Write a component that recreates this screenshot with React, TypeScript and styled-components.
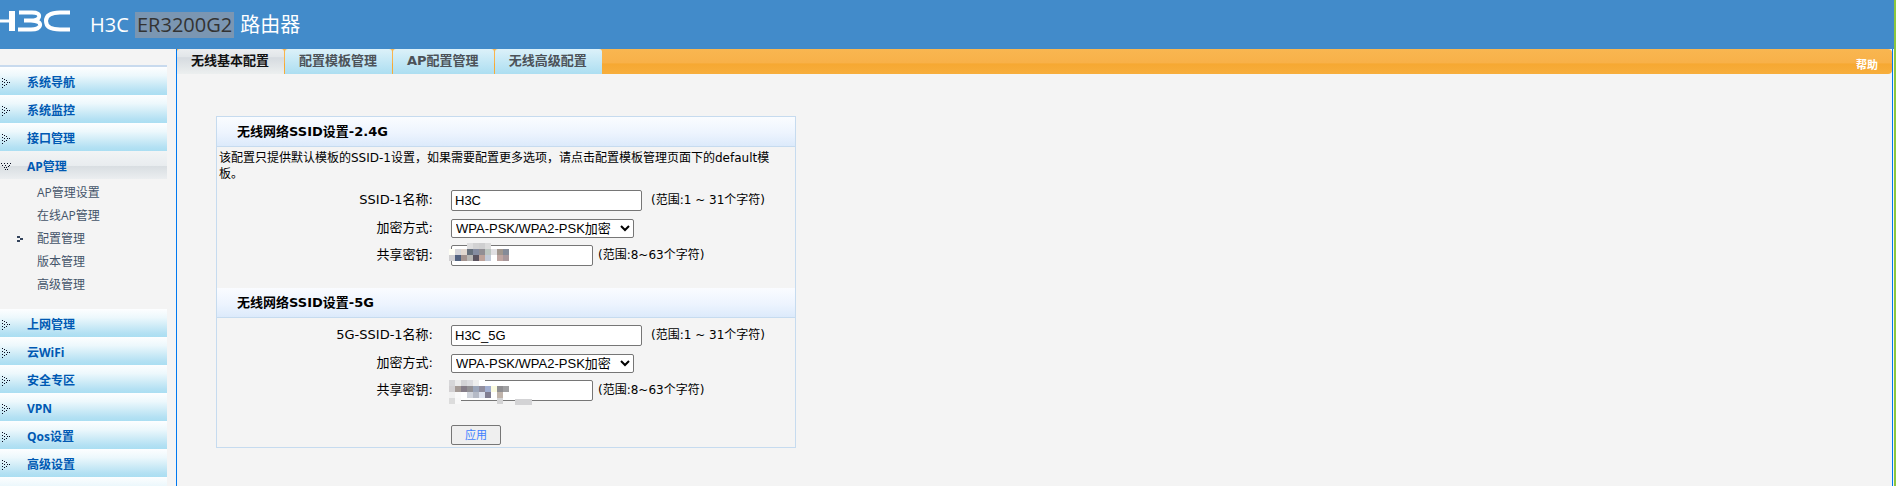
import React from "react";
import styled, { createGlobalStyle } from "styled-components";

const uiFont = `"Open Sans", "Noto Sans CJK SC", sans-serif`;
const wideFont = `"DejaVu Sans", "Noto Sans CJK SC", sans-serif`;
const fieldFont = `"Liberation Sans", "Noto Sans CJK SC", sans-serif`;

const GlobalStyle = createGlobalStyle`
  * { box-sizing: border-box; }
  body { margin: 0; background: #f4f4f4; color: #000; font: 12px/16px ${uiFont}; }
  #root { min-height: 100vh; display: flex; }
  ul { margin: 0; padding: 0; list-style: none; }
  a { color: inherit; text-decoration: none; }
`;

const Page = styled.div`
  flex: 1;
  min-width: 0;
  height: 100vh;
  overflow: hidden;
  display: flex;
  flex-direction: column;
  border-right: 2px solid #8cc63f;
`;

const Header = styled.header`
  flex: none;
  height: 49px;
  display: flex;
  align-items: center;
  gap: 19px;
  background: #428bca;
  color: #fff;
`;

const Logo = styled.svg`
  display: block;
  width: 71px;
  height: 49px;
`;

const Title = styled.h1`
  margin: 0;
  font-size: 20px;
  line-height: 26px;
  font-weight: 400;
`;

const Model = styled.mark`
  display: inline-block;
  margin: 0 1px;
  padding: 0 2px;
  background: #7b96b2;
  color: #333;
`;

const Body = styled.div`
  flex: 1;
  min-height: 0;
  display: flex;
`;

const Sidebar = styled.nav`
  flex: none;
  width: 176px;
  padding: 16px 9px 0 0;
  overflow: hidden;
`;

const Menu = styled.ul`
  border-top: 2px solid #c8daee;
`;

const MenuLink = styled.a<{ $open?: boolean }>`
  height: 28px;
  padding-top: 4px;
  display: flex;
  align-items: center;
  color: #0059b3;
  font-weight: 700;
  background: ${(p) =>
    p.$open
      ? "linear-gradient(#f2f4f5, #e8ecef 54%, #d9dee2 55%, #ebeef0)"
      : "linear-gradient(#fdfeff, #edf8fc 30%, #b5e1f3 85%, #aadef2)"};
`;

const Arrow = styled.svg`
  width: 12px;
  height: 12px;
  margin-right: 15px;
  fill: #080c20;
`;

const SubMenu = styled.ul`
  padding: 2px 0 13px;
`;

const SubLink = styled.a`
  height: 23px;
  display: flex;
  align-items: center;
  color: #44546a;
`;

const Marker = styled.span`
  width: 37px;
  padding-left: 17px;
  display: flex;
`;

const Main = styled.main`
  flex: 1;
  min-width: 0;
  margin-right: 1px;
  border: solid #0078f0;
  border-width: 0 1px;
`;

const TabBar = styled.div`
  height: 25px;
  display: flex;
  justify-content: space-between;
  background: linear-gradient(#f9b650, #f8b149 55%, #f6a832 60%, #f7ae3c);
  border-radius: 0 4px 4px 0;
`;

const Tabs = styled.nav`
  display: flex;
  gap: 1px;
`;

const Tab = styled.a<{ $active?: boolean }>`
  padding: 0 15px 0 14px;
  font: 700 13px/24px ${wideFont};
  white-space: nowrap;
  border-radius: 3px 3px 0 0;
  color: ${(p) => (p.$active ? "#111" : "#4c5258")};
  background: ${(p) =>
    p.$active
      ? "linear-gradient(#ebeef0, #e2e6e9 30%, #d6dbe0 35%, #ecefef)"
      : "linear-gradient(#dcf1f9, #acdef1)"};
`;

const Help = styled.a`
  padding: 7px 14px 0 0;
  font-size: 11px;
  line-height: 18px;
  font-weight: 700;
  color: #fff;
`;

const Panel = styled.form`
  width: 580px;
  max-width: 100%;
  margin: 42px 0 0 39px;
  border: 1px solid #c6dbef;
`;

const Heading = styled.h2`
  height: 30px;
  margin: 0;
  padding-left: 20px;
  font: 700 13px/30px ${wideFont};
  background: linear-gradient(#fafcff, #edf4fe 55%, #dceafb);
  border-bottom: 1px solid #c6dbef;
`;

const Note = styled.p`
  margin: 0;
  padding: 3px 20px 4px 2px;
  font-family: ${wideFont};
`;

const Fields = styled.div<{ $padded?: boolean }>`
  padding: ${(p) => (p.$padded ? "3px 0 0" : "0 0 20px")};
`;

const Row = styled.div<{ $compact?: boolean }>`
  height: ${(p) => (p.$compact ? 26 : 28)}px;
  display: flex;
  align-items: center;
`;

const Label = styled.label`
  width: 234px;
  padding-right: 18px;
  text-align: right;
  font: 13px/20px ${wideFont};
`;

const Control = styled.div`
  position: relative;
  display: flex;
`;

const TextBox = styled.input<{ $short?: boolean }>`
  width: ${(p) => (p.$short ? 142 : 191)}px;
  height: 21px;
  padding: 1px 3px;
  border: 1px solid #767676;
  border-radius: 2px;
  background: #fff;
  color: #000;
  font: 13px/17px ${fieldFont};
`;

const Choice = styled.select`
  width: 183px;
  height: 19px;
  padding: 0;
  border: 1px solid #767676;
  border-radius: 2px;
  background: #fff;
  color: #000;
  font: 13px/17px ${fieldFont};
`;

const Hint = styled.span<{ $near?: boolean }>`
  margin-left: ${(p) => (p.$near ? 5 : 9)}px;
  font-family: ${wideFont};
  white-space: pre;
`;

const Mask = styled.svg`
  position: absolute;
  left: -2px;
  top: -2px;
  pointer-events: none;
`;

const Actions = styled.div`
  padding: 22px 0 2px 234px;
  display: flex;
`;

const Apply = styled.button`
  width: 50px;
  height: 20px;
  padding: 0;
  border: 1px solid #767676;
  border-radius: 2px;
  background: #efefef;
  color: #4080ff;
  font: 11px/16px ${uiFont};
`;

const Dots = ({ points }: { points: number[][] }) => (
  <>
    {points.map(([x, y]) => (
      <rect key={`${x}-${y}`} x={x} y={y} width="1" height="1" />
    ))}
  </>
);

const closedDots = [[2, 1], [4, 2], [2, 4], [6, 3], [4, 5], [7, 5], [9, 5], [6, 7], [2, 7], [4, 8], [2, 10]];
const openDots = [[1, 2], [4, 2], [7, 2], [10, 2], [2, 4], [5, 4], [9, 4], [4, 6], [6, 6], [8, 5], [5, 8], [7, 8]];

const MenuItem = ({ text, open }: { text: string; open?: boolean }) => (
  <MenuLink href="#" $open={open}>
    <Arrow viewBox="0 0 12 12" shapeRendering="crispEdges" aria-hidden="true">
      <Dots points={open ? openDots : closedDots} />
    </Arrow>
    {text}
  </MenuLink>
);

const apItems = ["AP管理设置", "在线AP管理", "配置管理", "版本管理", "高级管理"];

const lowerItems = ["上网管理", "云WiFi", "安全专区", "VPN", "Qos设置", "高级设置", ""];

type Cell = [number, number, string];

const keyMask24: Cell[] = [
  [3, 0, "#dededf"], [4, 0, "#d2d2d3"], [5, 0, "#cfcfd0"], [6, 0, "#dcdcdc"],
  [0, 1, "#fffff5"], [1, 1, "#d5d5d8"], [2, 1, "#e2d8d0"], [3, 1, "#66707c"], [4, 1, "#858ca0"], [5, 1, "#918e94"], [6, 1, "#bdc6c2"], [7, 1, "#e0dfe2"], [8, 1, "#a1968d"], [9, 1, "#858b98"],
  [0, 2, "#d0cfd1"], [1, 2, "#51617e"], [2, 2, "#a3938f"], [3, 2, "#b9b7b4"], [4, 2, "#5b535f"], [5, 2, "#bda29a"], [6, 2, "#c2cad8"], [7, 2, "#ffffff"], [8, 2, "#bfa5a1"], [9, 2, "#a8979b"],
];

const keyMask5: Cell[] = [
  [0, 0, "#d6d6d8"], [1, 0, "#ebebeb"], [2, 0, "#d3d3d6"], [3, 0, "#dcdce0"], [4, 0, "#eeeeee"], [5, 0, "#ffffff"],
  [0, 1, "#d2d0d2"], [1, 1, "#a59b96"], [2, 1, "#857d88"], [3, 1, "#929094"], [4, 1, "#9ba5b9"], [5, 1, "#918e9e"], [6, 1, "#a1aed0"], [7, 1, "#fbfbdf"], [8, 1, "#8f8e91"], [9, 1, "#a0a0a2"],
  [0, 2, "#f1f1f1"], [1, 2, "#fafafa"], [2, 2, "#ffffff"], [3, 2, "#d0d4dc"], [4, 2, "#b5bac6"], [5, 2, "#dde2ee"], [6, 2, "#807d91"], [7, 2, "#ffffff"], [8, 2, "#c0b4ab"], [9, 2, "#ffffff"],
  [0, 3, "#dcdcdc"], [1, 3, "#f8f8f8"], [8, 3, "#d3d3d4"],
];

const KeyMask = ({ cells, tail }: { cells: Cell[]; tail?: boolean }) => (
  <Mask width="86" height="28" viewBox="0 0 86 28" shapeRendering="crispEdges" aria-hidden="true">
    {cells.map(([c, r, fill]) => (
      <rect key={`${c}-${r}`} x={c * 6} y={r * 6 + (tail ? 2 : 0)} width="6" height="6" fill={fill} />
    ))}
    {tail && <rect x="66" y="21" width="17" height="6" fill="#d3d3d5" />}
  </Mask>
);

const Settings = ({ id, prefix, ssid, cells, tail }: {
  id: string; prefix: string; ssid: string; cells: Cell[]; tail?: boolean;
}) => (
  <>
    <Row>
      <Label htmlFor={`${id}-name`}>{prefix}SSID-1名称:</Label>
      <TextBox id={`${id}-name`} defaultValue={ssid} />
      <Hint>(范围:1 ~ 31个字符)</Hint>
    </Row>
    <Row>
      <Label htmlFor={`${id}-mode`}>加密方式:</Label>
      <Choice id={`${id}-mode`}>
        <option>WPA-PSK/WPA2-PSK加密</option>
      </Choice>
    </Row>
    <Row $compact>
      <Label htmlFor={`${id}-key`}>共享密钥:</Label>
      <Control>
        <TextBox id={`${id}-key`} $short />
        <KeyMask cells={cells} tail={tail} />
      </Control>
      <Hint $near>(范围:8~63个字符)</Hint>
    </Row>
  </>
);

export default function App() {
  return (
    <>
      <GlobalStyle />
      <Page>
        <Header>
          <Logo viewBox="0 0 71 49" role="img" aria-label="H3C">
            <g fill="none" stroke="#fff">
              <path d="M0 21H10" strokeWidth="3" />
              <path d="M12 11V31" strokeWidth="6" />
              <path d="M19 12.5H32Q40 12.5 39 17Q38 20.5 31 20.5H24M31 20.5Q41 21 40 25.500Q39 29.500 31 29.500H18" strokeWidth="4" />
              <path d="M70 12.500H60Q46 12.500 46 21Q46 29.500 60 29.500H70" strokeWidth="4" />
            </g>
          </Logo>
          <Title>H3C <Model>ER3200G2</Model> 路由器</Title>
        </Header>
        <Body>
          <Sidebar>
            <Menu>
              <li><MenuItem text="系统导航" /></li>
              <li><MenuItem text="系统监控" /></li>
              <li><MenuItem text="接口管理" /></li>
              <li>
                <MenuItem text="AP管理" open />
                <SubMenu>
                  {apItems.map((item) => (
                    <li key={item}>
                      <SubLink href="#">
                        <Marker>
                          {item === "配置管理" && (
                            <svg width="6" height="6" viewBox="0 0 6 6" fill="#34435c" shapeRendering="crispEdges" aria-hidden="true">
                              <path d="M0 0h3v2h-3zM3 2h3v2h-3zM0 4h3v2h-3z" />
                            </svg>
                          )}
                        </Marker>
                        {item}
                      </SubLink>
                    </li>
                  ))}
                </SubMenu>
              </li>
              {lowerItems.map((item) => (
                <li key={item}><MenuItem text={item} /></li>
              ))}
            </Menu>
          </Sidebar>
          <Main>
            <TabBar>
              <Tabs>
                <Tab href="#" $active>无线基本配置</Tab>
                <Tab href="#">配置模板管理</Tab>
                <Tab href="#">AP配置管理</Tab>
                <Tab href="#">无线高级配置</Tab>
              </Tabs>
              <Help href="#">帮助</Help>
            </TabBar>
            <Panel>
              <Heading>无线网络SSID设置-2.4G</Heading>
              <Note>该配置只提供默认模板的SSID-1设置，如果需要配置更多选项，请点击配置模板管理页面下的default模板。</Note>
              <Fields>
                <Settings id="band24" prefix="" ssid="H3C" cells={keyMask24} />
              </Fields>
              <Heading>无线网络SSID设置-5G</Heading>
              <Fields $padded>
                <Settings id="band5" prefix="5G-" ssid="H3C_5G" cells={keyMask5} tail />
              </Fields>
              <Actions>
                <Apply type="button">应用</Apply>
              </Actions>
            </Panel>
          </Main>
        </Body>
      </Page>
    </>
  );
}
